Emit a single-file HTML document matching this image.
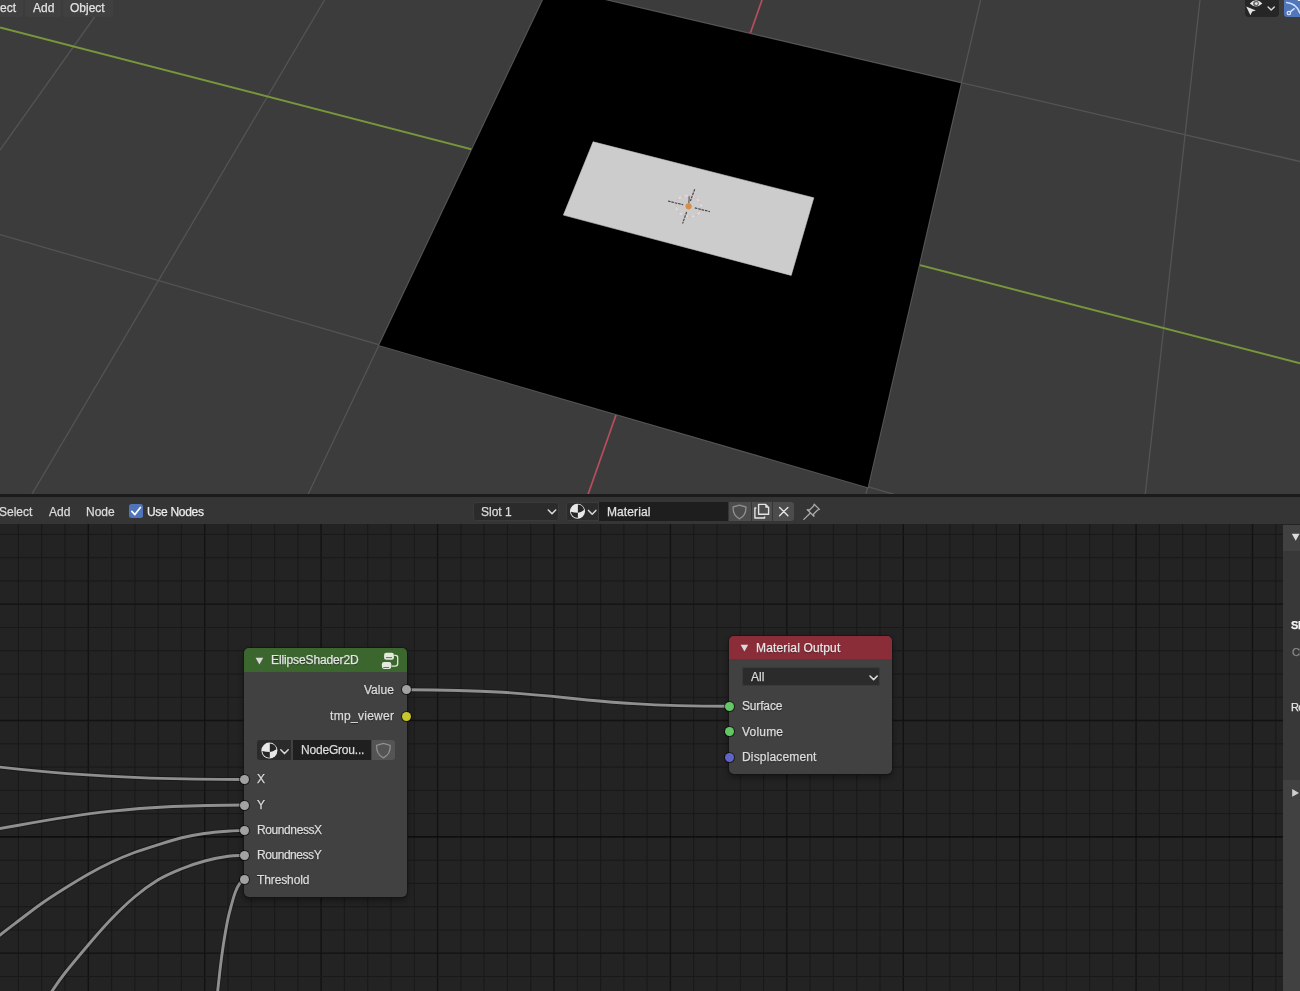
<!DOCTYPE html>
<html><head><meta charset="utf-8"><title>Blender</title>
<style>
html,body{margin:0;padding:0;}
body{width:1300px;height:991px;overflow:hidden;position:relative;background:#232323;
 font-family:"Liberation Sans",sans-serif;font-size:12px;color:#dcdcdc;}
.abs{position:absolute;}
.t{position:absolute;white-space:nowrap;line-height:14px;height:14px;will-change:transform;-webkit-text-stroke:0.25px currentColor;}
.sh{text-shadow:0 1px 1px rgba(0,0,0,.55);}
.sock{position:absolute;width:9px;height:9px;border-radius:50%;box-shadow:0 0 0 1px rgba(0,0,0,.55);}
</style></head><body>

<svg class="abs" style="left:0;top:0" width="1300" height="494" viewBox="0 0 1300 494">
<rect width="1300" height="494" fill="#3c3c3c"/>
<line x1="106.6" y1="0.0" x2="0.0" y2="150.0" stroke="#545454" stroke-width="1.30" />
<line x1="324.6" y1="0.0" x2="32.0" y2="494.0" stroke="#545454" stroke-width="1.30" />
<line x1="549.2" y1="-13.1" x2="308.2" y2="494.0" stroke="#545454" stroke-width="1.30" />
<line x1="980.6" y1="0.0" x2="866.0" y2="494.0" stroke="#545454" stroke-width="1.30" />
<line x1="1200.0" y1="0.0" x2="1145.3" y2="494.0" stroke="#545454" stroke-width="1.30" />
<line x1="0.0" y1="234.5" x2="895.0" y2="494.6" stroke="#545454" stroke-width="1.30" />
<line x1="476.7" y1="-30.0" x2="1300.0" y2="161.5" stroke="#545454" stroke-width="1.30" />
<line x1="0.0" y1="27.4" x2="1300.0" y2="363.3" stroke="#78963a" stroke-width="1.90" />
<line x1="762.0" y1="0.0" x2="588.0" y2="494.5" stroke="#b64d60" stroke-width="1.70" />
<polygon points="549.2,-13.05 960.9,83.2 867.7,487.2 379.2,345.2" fill="none" stroke="#555555" stroke-width="2.1"/>
<polygon points="549.2,-13.05 960.9,83.2 867.7,487.2 379.2,345.2" fill="#000"/>
<polygon points="593.1,141.8 813.8,197.8 791.2,275.4 563.4,215.1" fill="#cccccc" stroke="#cccccc" stroke-width="0.6" stroke-linejoin="round"/>
<g>
<ellipse cx="688.6" cy="206.2" rx="13" ry="10.2" fill="none" stroke="#e9a9a9" stroke-width="1.5" stroke-dasharray="3 3.4" opacity=".42" transform="rotate(14 688.6 206.2)"/>
<ellipse cx="688.6" cy="206.2" rx="13" ry="10.2" fill="none" stroke="#f8f8f8" stroke-width="1.5" stroke-dasharray="3 3.4" stroke-dashoffset="3.2" opacity=".42" transform="rotate(14 688.6 206.2)"/>
<line x1="668.0" y1="201.0" x2="683.2" y2="204.8" stroke="#303030" stroke-width="1.15" stroke-dasharray="2.6 0.9" opacity=".88"/>
<line x1="694.8" y1="207.9" x2="709.8" y2="211.6" stroke="#303030" stroke-width="1.15" stroke-dasharray="2.6 0.9" opacity=".88"/>
<line x1="694.7" y1="189.2" x2="690.4" y2="201.0" stroke="#303030" stroke-width="1.15" stroke-dasharray="2.6 0.9" opacity=".88"/>
<line x1="686.6" y1="212.0" x2="682.6" y2="223.5" stroke="#303030" stroke-width="1.15" stroke-dasharray="2.6 0.9" opacity=".88"/>
<line x1="689.2" y1="196.2" x2="688.8" y2="203.5" stroke="#3a3a3a" stroke-width="1.15" opacity=".8"/>
<circle cx="688.6" cy="206.3" r="3.1" fill="#d78f47"/>
</g>
</svg>
<div class="abs" style="left:-10px;top:-2px;width:33px;height:18.5px;background:#404040;border-radius:0 0 3px 3px;"></div>
<div class="t" style="left:-0.4px;top:0.5px;color:#e2e2e2">ect</div>
<div class="abs" style="left:25px;top:-2px;width:35.5px;height:18.5px;background:#404040;border-radius:0 0 3px 3px;"></div>
<div class="t" style="left:33px;top:0.5px;color:#e2e2e2">Add</div>
<div class="abs" style="left:62.5px;top:-2px;width:50.5px;height:18.5px;background:#404040;border-radius:0 0 3px 3px;"></div>
<div class="t" style="left:70px;top:0.5px;color:#e2e2e2">Object</div>
<div class="abs" style="left:1244.5px;top:-4px;width:34px;height:20.5px;background:#262626;border-radius:0 0 4px 4px;"></div>
<svg class="abs" style="left:1244px;top:0" width="36" height="18" viewBox="1244 0 36 18">
<path d="M1249.8 3.6 Q1256 -3.2 1262.3 3.6 Q1256 9.6 1249.8 3.6 Z" fill="#e4e4e4"/>
<circle cx="1256" cy="3.6" r="2.9" fill="#6a6a6a"/>
<circle cx="1256.3" cy="3.6" r="1.4" fill="#e4e4e4"/>
<polygon points="1246.2,6.4 1255.9,10.5 1252.2,11.6 1250.4,15.2" fill="#e4e4e4"/>
<polyline points="1268.1,7.0 1271.2,10.1 1274.3,7.0" fill="none" stroke="#d8d8d8" stroke-width="1.4" stroke-linecap="round" stroke-linejoin="round"/>
</svg>
<div class="abs" style="left:1284px;top:-4px;width:20px;height:21px;background:#5176ba;border-radius:0 0 0 3px;"></div>
<svg class="abs" style="left:1284px;top:0" width="16" height="18" viewBox="1284 0 16 18">
<path d="M1286.6 2.4 Q1296.5 3.2 1299.8 13" fill="none" stroke="#cfe0ff" stroke-width="1.5" stroke-linecap="round"/>
<rect x="1297.8" y="-1" width="3" height="1.9" fill="#fff"/>
<line x1="1290.2" y1="11.9" x2="1294.6" y2="8.4" stroke="#cfe0ff" stroke-width="1.4"/>
<circle cx="1288.9" cy="13" r="1.7" fill="none" stroke="#dbe7ff" stroke-width="1.3"/>
</svg>
<div class="abs" style="left:0;top:494px;width:1300px;height:3px;background:#1b1b1b"></div>
<div class="abs" style="left:0;top:497px;width:1300px;height:27px;background:#353535"></div>
<div class="t" style="left:-1.5px;top:504.5px;color:#dcdcdc;">Select</div>
<div class="t" style="left:49px;top:504.5px;color:#dcdcdc;">Add</div>
<div class="t" style="left:86.3px;top:504.5px;color:#dcdcdc;">Node</div>
<div class="abs" style="left:128.8px;top:504.3px;width:14.4px;height:14px;background:#4f74b9;border-radius:2.5px;"></div>
<svg class="abs" style="left:128px;top:503px" width="17" height="17" viewBox="128 503 17 17">
<polyline points="131.8,511.3 134.9,514.6 140.4,507.4" fill="none" stroke="#ffffff" stroke-width="1.7" stroke-linecap="round" stroke-linejoin="round"/></svg>
<div class="t" style="left:147.3px;top:504.5px;color:#ececec;letter-spacing:-0.3px">Use Nodes</div>
<div class="abs" style="left:473px;top:502px;width:85.5px;height:18.5px;background:#2b2b2b;border-radius:3px;box-shadow:0 0 0 1px #3b3b3b inset;"></div>
<div class="t" style="left:480.6px;top:504.5px;color:#dcdcdc;">Slot 1</div>
<svg class="abs" style="left:545px;top:505px" width="14" height="14" viewBox="545 505 14 14">
<polyline points="548.3,510 552,513.7 555.7,510" fill="none" stroke="#d8d8d8" stroke-width="1.6" stroke-linecap="round" stroke-linejoin="round"/></svg>
<div class="abs" style="left:566px;top:502px;width:32.5px;height:18.5px;background:#2b2b2b;border-radius:3px 0 0 3px;box-shadow:0 0 0 1px #3b3b3b inset;"></div>
<svg class="abs" style="left:566px;top:501px" width="36" height="22" viewBox="566 501 36 22"><circle cx="577.5" cy="511.2" r="7.5" fill="#e8e8e8"/><path d="M577.90 512.70 L577.90 504.55 A6.65 6.65 0 0 1 584.03 509.93 Q580.90 512.30 577.90 512.70 Z" fill="#262626"/><path d="M577.90 512.70 L577.90 517.85 A6.65 6.65 0 0 1 570.87 511.66 Q574.10 512.70 577.90 512.70 Z" fill="#262626"/><polyline points="588.5,510.4 592.2,514.2 595.9,510.4" fill="none" stroke="#d8d8d8" stroke-width="1.5" stroke-linecap="round" stroke-linejoin="round"/></svg>
<div class="abs" style="left:599.3px;top:502px;width:129.2px;height:18.5px;background:#1e1e1e;"></div>
<div class="t" style="left:607.2px;top:504.5px;color:#e2e2e2;letter-spacing:0.1px">Material</div>
<div class="abs" style="left:729.3px;top:502px;width:21.5px;height:18.5px;background:#4c4c4c;"></div>
<div class="abs" style="left:751.8px;top:502px;width:20.6px;height:18.5px;background:#4c4c4c;"></div>
<div class="abs" style="left:773.4px;top:502px;width:20.6px;height:18.5px;background:#4c4c4c;border-radius:0 3px 3px 0;"></div>
<svg class="abs" style="left:729px;top:501px" width="95" height="21" viewBox="729 501 95 21">
<path d="M739.5 505.2 L745.9 507 Q746.3 515.5 739.5 518.8 Q732.7 515.5 733.1 507 Z" fill="none" stroke="#8e8e8e" stroke-width="1.3" stroke-linejoin="round"/>
<path d="M758.6 504.4 H765.6 L768.6 507.4 V514.2 H758.6 Z" fill="#4c4c4c" stroke="#e4e4e4" stroke-width="1.4" stroke-linejoin="round"/>
<path d="M765.3 504.4 V507.7 H768.6 Z" fill="#e4e4e4"/>
<path d="M756.3 508 H754.9 V518 H764.6 V516.4" fill="none" stroke="#e4e4e4" stroke-width="1.4" stroke-linejoin="round"/>
<path d="M779.6 507.4 L787.9 515.7 M787.9 507.4 L779.6 515.7" stroke="#e6e6e6" stroke-width="1.35" stroke-linecap="round"/>
<g fill="none" stroke="#a9a9a9" stroke-width="1.3" stroke-linejoin="round" stroke-linecap="round">
<path d="M814.2 504.2 L819.4 509.4 L817.6 510 L813.6 514 L813.9 516.3 L807.3 509.7 L809.6 510 L813.6 506 Z"/>
<path d="M810.4 513 L803.8 519.4"/>
</g>
</svg>
<svg class="abs" style="left:0;top:524px" width="1283" height="467" viewBox="0 524 1283 467">
<rect x="0" y="524" width="1283" height="467" fill="#232323"/>
<line x1="18.4" y1="524.0" x2="18.4" y2="991.0" stroke="#191919" stroke-width="1.00" />
<line x1="41.7" y1="524.0" x2="41.7" y2="991.0" stroke="#191919" stroke-width="1.00" />
<line x1="65.0" y1="524.0" x2="65.0" y2="991.0" stroke="#191919" stroke-width="1.00" />
<line x1="88.3" y1="524.0" x2="88.3" y2="991.0" stroke="#121212" stroke-width="1.30" />
<line x1="111.6" y1="524.0" x2="111.6" y2="991.0" stroke="#191919" stroke-width="1.00" />
<line x1="134.9" y1="524.0" x2="134.9" y2="991.0" stroke="#191919" stroke-width="1.00" />
<line x1="158.2" y1="524.0" x2="158.2" y2="991.0" stroke="#191919" stroke-width="1.00" />
<line x1="181.4" y1="524.0" x2="181.4" y2="991.0" stroke="#191919" stroke-width="1.00" />
<line x1="204.7" y1="524.0" x2="204.7" y2="991.0" stroke="#121212" stroke-width="1.30" />
<line x1="228.0" y1="524.0" x2="228.0" y2="991.0" stroke="#191919" stroke-width="1.00" />
<line x1="251.3" y1="524.0" x2="251.3" y2="991.0" stroke="#191919" stroke-width="1.00" />
<line x1="274.6" y1="524.0" x2="274.6" y2="991.0" stroke="#191919" stroke-width="1.00" />
<line x1="297.9" y1="524.0" x2="297.9" y2="991.0" stroke="#191919" stroke-width="1.00" />
<line x1="321.1" y1="524.0" x2="321.1" y2="991.0" stroke="#121212" stroke-width="1.30" />
<line x1="344.4" y1="524.0" x2="344.4" y2="991.0" stroke="#191919" stroke-width="1.00" />
<line x1="367.7" y1="524.0" x2="367.7" y2="991.0" stroke="#191919" stroke-width="1.00" />
<line x1="391.0" y1="524.0" x2="391.0" y2="991.0" stroke="#191919" stroke-width="1.00" />
<line x1="414.3" y1="524.0" x2="414.3" y2="991.0" stroke="#191919" stroke-width="1.00" />
<line x1="437.6" y1="524.0" x2="437.6" y2="991.0" stroke="#121212" stroke-width="1.30" />
<line x1="460.9" y1="524.0" x2="460.9" y2="991.0" stroke="#191919" stroke-width="1.00" />
<line x1="484.1" y1="524.0" x2="484.1" y2="991.0" stroke="#191919" stroke-width="1.00" />
<line x1="507.4" y1="524.0" x2="507.4" y2="991.0" stroke="#191919" stroke-width="1.00" />
<line x1="530.7" y1="524.0" x2="530.7" y2="991.0" stroke="#191919" stroke-width="1.00" />
<line x1="554.0" y1="524.0" x2="554.0" y2="991.0" stroke="#121212" stroke-width="1.30" />
<line x1="577.3" y1="524.0" x2="577.3" y2="991.0" stroke="#191919" stroke-width="1.00" />
<line x1="600.6" y1="524.0" x2="600.6" y2="991.0" stroke="#191919" stroke-width="1.00" />
<line x1="623.9" y1="524.0" x2="623.9" y2="991.0" stroke="#191919" stroke-width="1.00" />
<line x1="647.1" y1="524.0" x2="647.1" y2="991.0" stroke="#191919" stroke-width="1.00" />
<line x1="670.4" y1="524.0" x2="670.4" y2="991.0" stroke="#121212" stroke-width="1.30" />
<line x1="693.7" y1="524.0" x2="693.7" y2="991.0" stroke="#191919" stroke-width="1.00" />
<line x1="717.0" y1="524.0" x2="717.0" y2="991.0" stroke="#191919" stroke-width="1.00" />
<line x1="740.3" y1="524.0" x2="740.3" y2="991.0" stroke="#191919" stroke-width="1.00" />
<line x1="763.6" y1="524.0" x2="763.6" y2="991.0" stroke="#191919" stroke-width="1.00" />
<line x1="786.8" y1="524.0" x2="786.8" y2="991.0" stroke="#121212" stroke-width="1.30" />
<line x1="810.1" y1="524.0" x2="810.1" y2="991.0" stroke="#191919" stroke-width="1.00" />
<line x1="833.4" y1="524.0" x2="833.4" y2="991.0" stroke="#191919" stroke-width="1.00" />
<line x1="856.7" y1="524.0" x2="856.7" y2="991.0" stroke="#191919" stroke-width="1.00" />
<line x1="880.0" y1="524.0" x2="880.0" y2="991.0" stroke="#191919" stroke-width="1.00" />
<line x1="903.3" y1="524.0" x2="903.3" y2="991.0" stroke="#121212" stroke-width="1.30" />
<line x1="926.6" y1="524.0" x2="926.6" y2="991.0" stroke="#191919" stroke-width="1.00" />
<line x1="949.8" y1="524.0" x2="949.8" y2="991.0" stroke="#191919" stroke-width="1.00" />
<line x1="973.1" y1="524.0" x2="973.1" y2="991.0" stroke="#191919" stroke-width="1.00" />
<line x1="996.4" y1="524.0" x2="996.4" y2="991.0" stroke="#191919" stroke-width="1.00" />
<line x1="1019.7" y1="524.0" x2="1019.7" y2="991.0" stroke="#121212" stroke-width="1.30" />
<line x1="1043.0" y1="524.0" x2="1043.0" y2="991.0" stroke="#191919" stroke-width="1.00" />
<line x1="1066.3" y1="524.0" x2="1066.3" y2="991.0" stroke="#191919" stroke-width="1.00" />
<line x1="1089.6" y1="524.0" x2="1089.6" y2="991.0" stroke="#191919" stroke-width="1.00" />
<line x1="1112.8" y1="524.0" x2="1112.8" y2="991.0" stroke="#191919" stroke-width="1.00" />
<line x1="1136.1" y1="524.0" x2="1136.1" y2="991.0" stroke="#121212" stroke-width="1.30" />
<line x1="1159.4" y1="524.0" x2="1159.4" y2="991.0" stroke="#191919" stroke-width="1.00" />
<line x1="1182.7" y1="524.0" x2="1182.7" y2="991.0" stroke="#191919" stroke-width="1.00" />
<line x1="1206.0" y1="524.0" x2="1206.0" y2="991.0" stroke="#191919" stroke-width="1.00" />
<line x1="1229.3" y1="524.0" x2="1229.3" y2="991.0" stroke="#191919" stroke-width="1.00" />
<line x1="1252.5" y1="524.0" x2="1252.5" y2="991.0" stroke="#121212" stroke-width="1.30" />
<line x1="1275.8" y1="524.0" x2="1275.8" y2="991.0" stroke="#191919" stroke-width="1.00" />
<line x1="0.0" y1="976.5" x2="1283.0" y2="976.5" stroke="#191919" stroke-width="1.00" />
<line x1="0.0" y1="953.2" x2="1283.0" y2="953.2" stroke="#121212" stroke-width="1.30" />
<line x1="0.0" y1="930.0" x2="1283.0" y2="930.0" stroke="#191919" stroke-width="1.00" />
<line x1="0.0" y1="906.7" x2="1283.0" y2="906.7" stroke="#191919" stroke-width="1.00" />
<line x1="0.0" y1="883.4" x2="1283.0" y2="883.4" stroke="#191919" stroke-width="1.00" />
<line x1="0.0" y1="860.2" x2="1283.0" y2="860.2" stroke="#191919" stroke-width="1.00" />
<line x1="0.0" y1="836.9" x2="1283.0" y2="836.9" stroke="#090909" stroke-width="1.40" />
<line x1="0.0" y1="813.6" x2="1283.0" y2="813.6" stroke="#191919" stroke-width="1.00" />
<line x1="0.0" y1="790.4" x2="1283.0" y2="790.4" stroke="#191919" stroke-width="1.00" />
<line x1="0.0" y1="767.1" x2="1283.0" y2="767.1" stroke="#191919" stroke-width="1.00" />
<line x1="0.0" y1="743.8" x2="1283.0" y2="743.8" stroke="#191919" stroke-width="1.00" />
<line x1="0.0" y1="720.5" x2="1283.0" y2="720.5" stroke="#121212" stroke-width="1.30" />
<line x1="0.0" y1="697.3" x2="1283.0" y2="697.3" stroke="#191919" stroke-width="1.00" />
<line x1="0.0" y1="674.0" x2="1283.0" y2="674.0" stroke="#191919" stroke-width="1.00" />
<line x1="0.0" y1="650.7" x2="1283.0" y2="650.7" stroke="#191919" stroke-width="1.00" />
<line x1="0.0" y1="627.5" x2="1283.0" y2="627.5" stroke="#191919" stroke-width="1.00" />
<line x1="0.0" y1="604.2" x2="1283.0" y2="604.2" stroke="#121212" stroke-width="1.30" />
<line x1="0.0" y1="580.9" x2="1283.0" y2="580.9" stroke="#191919" stroke-width="1.00" />
<line x1="0.0" y1="557.7" x2="1283.0" y2="557.7" stroke="#191919" stroke-width="1.00" />
<line x1="0.0" y1="534.4" x2="1283.0" y2="534.4" stroke="#191919" stroke-width="1.00" />
<path d="M407 689.7 C568 689.7 568 706.2 729.5 706.2" fill="none" stroke="#171717" stroke-width="4.6" stroke-linecap="round" opacity=".75"/>
<path d="M407 689.7 C568 689.7 568 706.2 729.5 706.2" fill="none" stroke="#8f8f8f" stroke-width="2.9" stroke-linecap="round"/>
<path d="M-349.4 742.1 C-52.8 742.1 -52.8 779.5 243.8 779.5" fill="none" stroke="#171717" stroke-width="4.6" stroke-linecap="round" opacity=".75"/>
<path d="M-349.4 742.1 C-52.8 742.1 -52.8 779.5 243.8 779.5" fill="none" stroke="#8f8f8f" stroke-width="2.9" stroke-linecap="round"/>
<path d="M-209.4 846.0 C17.2 846.0 17.2 805.0 243.8 805.0" fill="none" stroke="#171717" stroke-width="4.6" stroke-linecap="round" opacity=".75"/>
<path d="M-209.4 846.0 C17.2 846.0 17.2 805.0 243.8 805.0" fill="none" stroke="#8f8f8f" stroke-width="2.9" stroke-linecap="round"/>
<path d="M-18.0 950.0 C-12.0 945.0 -6.0 939.8 0.0 935.0 C6.0 930.2 11.4 926.2 18.3 921.0 C25.2 915.8 33.6 909.1 41.3 903.7 C49.0 898.3 56.7 893.4 64.5 888.5 C72.3 883.6 80.4 878.6 88.2 874.2 C96.0 869.8 103.6 865.8 111.3 862.2 C119.0 858.6 126.8 855.4 134.5 852.5 C142.2 849.6 150.1 847.2 157.8 844.8 C165.5 842.4 173.1 839.9 180.8 838.0 C188.5 836.1 196.5 834.6 204.2 833.5 C211.9 832.4 220.3 831.7 226.9 831.2 C233.5 830.7 238.2 830.7 243.8 830.5" fill="none" stroke="#171717" stroke-width="4.6" stroke-linecap="round" opacity=".75"/>
<path d="M-18.0 950.0 C-12.0 945.0 -6.0 939.8 0.0 935.0 C6.0 930.2 11.4 926.2 18.3 921.0 C25.2 915.8 33.6 909.1 41.3 903.7 C49.0 898.3 56.7 893.4 64.5 888.5 C72.3 883.6 80.4 878.6 88.2 874.2 C96.0 869.8 103.6 865.8 111.3 862.2 C119.0 858.6 126.8 855.4 134.5 852.5 C142.2 849.6 150.1 847.2 157.8 844.8 C165.5 842.4 173.1 839.9 180.8 838.0 C188.5 836.1 196.5 834.6 204.2 833.5 C211.9 832.4 220.3 831.7 226.9 831.2 C233.5 830.7 238.2 830.7 243.8 830.5" fill="none" stroke="#8f8f8f" stroke-width="2.9" stroke-linecap="round"/>
<path d="M42.0 1005.0 C45.4 1000.3 48.4 996.2 52.1 991.0 C55.8 985.8 58.2 981.7 64.2 974.0 C70.2 966.3 80.4 954.2 88.2 945.0 C96.0 935.8 103.6 927.0 111.3 919.0 C119.0 911.0 126.8 903.5 134.5 897.0 C142.2 890.5 150.1 884.7 157.8 880.0 C165.6 875.3 173.2 872.2 181.0 869.0 C188.8 865.8 197.0 863.1 204.8 861.0 C212.6 858.9 221.5 857.2 228.0 856.3 C234.5 855.3 238.5 855.6 243.8 855.3" fill="none" stroke="#171717" stroke-width="4.6" stroke-linecap="round" opacity=".75"/>
<path d="M42.0 1005.0 C45.4 1000.3 48.4 996.2 52.1 991.0 C55.8 985.8 58.2 981.7 64.2 974.0 C70.2 966.3 80.4 954.2 88.2 945.0 C96.0 935.8 103.6 927.0 111.3 919.0 C119.0 911.0 126.8 903.5 134.5 897.0 C142.2 890.5 150.1 884.7 157.8 880.0 C165.6 875.3 173.2 872.2 181.0 869.0 C188.8 865.8 197.0 863.1 204.8 861.0 C212.6 858.9 221.5 857.2 228.0 856.3 C234.5 855.3 238.5 855.6 243.8 855.3" fill="none" stroke="#8f8f8f" stroke-width="2.9" stroke-linecap="round"/>
<path d="M216.6 1005.0 C217.0 1000.3 217.1 997.0 217.7 991.0 C218.3 985.0 219.2 976.9 220.1 969.2 C221.0 961.5 222.1 953.1 223.3 945.0 C224.6 936.9 226.2 927.3 227.6 920.4 C229.0 913.5 230.5 908.4 231.8 903.6 C233.1 898.8 234.2 894.9 235.5 891.7 C236.8 888.5 237.9 886.2 239.3 884.2 C240.7 882.2 242.3 881.2 243.8 879.7" fill="none" stroke="#171717" stroke-width="4.6" stroke-linecap="round" opacity=".75"/>
<path d="M216.6 1005.0 C217.0 1000.3 217.1 997.0 217.7 991.0 C218.3 985.0 219.2 976.9 220.1 969.2 C221.0 961.5 222.1 953.1 223.3 945.0 C224.6 936.9 226.2 927.3 227.6 920.4 C229.0 913.5 230.5 908.4 231.8 903.6 C233.1 898.8 234.2 894.9 235.5 891.7 C236.8 888.5 237.9 886.2 239.3 884.2 C240.7 882.2 242.3 881.2 243.8 879.7" fill="none" stroke="#8f8f8f" stroke-width="2.9" stroke-linecap="round"/>
</svg>
<div class="abs" style="left:244px;top:648.3px;width:162.6px;height:248.7px;background:#414141;border-radius:5px;box-shadow:0 0 0 1px rgba(20,20,20,.75),0 3px 6px rgba(0,0,0,.45);overflow:hidden;"><div style="height:23.3px;background:#3b662e;"></div></div>
<svg class="abs" style="left:255.3px;top:656.55px" width="10" height="9" viewBox="0 0 10 9"><polygon points="0.6,0.8 8.2,0.8 4.4,7.6" fill="#d9d9d9"/></svg>
<div class="t sh" style="left:271.2px;top:653.35px;color:#e6e6e6;letter-spacing:-0.12px">EllipseShader2D</div>
<svg class="abs" style="left:380px;top:651px" width="20" height="20" viewBox="380 651 20 20">
<rect x="384.1" y="652.8" width="9.8" height="7" rx="2.1" fill="#e4e9df"/>
<rect x="381.9" y="662.1" width="9.4" height="6.8" rx="2.1" fill="#e4e9df"/>
<rect x="386" y="657.2" width="6" height="0.9" fill="#55624e"/>
<rect x="383.3" y="667" width="5.8" height="0.9" fill="#55624e"/>
<path d="M394.2 655.3 H395.6 Q397.7 655.3 397.7 657.5 V663.6 Q397.7 666.2 395.1 666.2 H391.6" fill="none" stroke="#dfe8d6" stroke-width="1.3"/>
</svg>
<div class="t sh" style="right:906px;top:682.7px;">Value</div>
<div class="t sh" style="right:905.8px;top:708.9px;letter-spacing:0.3px">tmp_viewer</div>
<div class="sock" style="left:402.4px;top:685.2px;background:#a2a2a2"></div>
<div class="sock" style="left:402.4px;top:711.5px;background:#c8c82a"></div>
<div class="abs" style="left:257px;top:740.3px;width:33.7px;height:20.2px;background:#2b2b2b;border-radius:3px 0 0 3px;"></div>
<div class="abs" style="left:293px;top:740.3px;width:78px;height:20.2px;background:#1f1f1f;"></div>
<div class="abs" style="left:371.6px;top:740.3px;width:23.6px;height:20.2px;background:#545454;border-radius:0 3px 3px 0;"></div>
<svg class="abs" style="left:257px;top:739px" width="36" height="22" viewBox="257 739 36 22"><circle cx="269.4" cy="750.6" r="8" fill="#e8e8e8"/><path d="M269.80 752.10 L269.80 743.45 A7.15 7.15 0 0 1 276.42 749.24 Q272.80 751.70 269.80 752.10 Z" fill="#262626"/><path d="M269.80 752.10 L269.80 757.75 A7.15 7.15 0 0 1 262.27 751.10 Q266.00 752.10 269.80 752.10 Z" fill="#262626"/><polyline points="280.8,749.8 284.5,753.6 288.2,749.8" fill="none" stroke="#d8d8d8" stroke-width="1.5" stroke-linecap="round" stroke-linejoin="round"/></svg>
<div class="t sh" style="left:301.3px;top:743.4px;letter-spacing:-0.2px">NodeGrou...</div>
<svg class="abs" style="left:372px;top:741px" width="23" height="19" viewBox="372 741 23 19">
<path d="M383.4 743.4 L390.2 745.4 Q390.6 754.4 383.4 757.9 Q376.2 754.4 376.6 745.4 Z" fill="none" stroke="#8f8f8f" stroke-width="1.3" stroke-linejoin="round"/></svg>
<div class="sock" style="left:239.6px;top:774.9px;background:#a2a2a2"></div>
<div class="t sh" style="left:257.2px;top:772.2px;letter-spacing:0px">X</div>
<div class="sock" style="left:239.6px;top:800.5px;background:#a2a2a2"></div>
<div class="t sh" style="left:257.2px;top:797.8px;letter-spacing:0px">Y</div>
<div class="sock" style="left:239.6px;top:825.9px;background:#a2a2a2"></div>
<div class="t sh" style="left:257.2px;top:823.2px;letter-spacing:-0.4px">RoundnessX</div>
<div class="sock" style="left:239.6px;top:850.8px;background:#a2a2a2"></div>
<div class="t sh" style="left:257.2px;top:848.1px;letter-spacing:-0.45px">RoundnessY</div>
<div class="sock" style="left:239.6px;top:875.2px;background:#a2a2a2"></div>
<div class="t sh" style="left:257.2px;top:872.5px;letter-spacing:-0.12px">Threshold</div>
<div class="abs" style="left:729.3px;top:635.8px;width:162.8px;height:138.6px;background:#414141;border-radius:5px;box-shadow:0 0 0 1px rgba(20,20,20,.75),0 3px 6px rgba(0,0,0,.45);overflow:hidden;"><div style="height:23.2px;background:#8b2c39;"></div></div>
<svg class="abs" style="left:740.3px;top:644px" width="10" height="9" viewBox="0 0 10 9"><polygon points="0.6,0.8 8.2,0.8 4.4,7.6" fill="#d9d9d9"/></svg>
<div class="t sh" style="left:756.2px;top:640.8px;color:#e6e6e6;letter-spacing:0.16px">Material Output</div>
<div class="abs" style="left:742.4px;top:667.4px;width:137.2px;height:19px;background:#2b2b2b;border-radius:3px;box-shadow:0 0 0 1px #3a3a3a inset;"></div>
<div class="t sh" style="left:750.5px;top:669.8px;">All</div>
<svg class="abs" style="left:866px;top:671px" width="14" height="14" viewBox="866 671 14 14">
<polyline points="870,676 873.6,679.6 877.2,676" fill="none" stroke="#d8d8d8" stroke-width="1.6" stroke-linecap="round" stroke-linejoin="round"/></svg>
<div class="sock" style="left:725px;top:701.7px;background:#63c763"></div>
<div class="t sh" style="left:742.2px;top:699px;letter-spacing:-0.16px">Surface</div>
<div class="sock" style="left:725px;top:727.4px;background:#63c763"></div>
<div class="t sh" style="left:742.2px;top:724.7px;letter-spacing:0.2px">Volume</div>
<div class="sock" style="left:725px;top:752.9px;background:#6363c7"></div>
<div class="t sh" style="left:742.2px;top:750.2px;letter-spacing:0.16px">Displacement</div>
<div class="abs" style="left:1282.7px;top:525px;width:18px;height:467px;background:#414141"></div>
<div class="abs" style="left:1282.7px;top:551px;width:18px;height:228.5px;background:#383838"></div>
<svg class="abs" style="left:1290px;top:532px" width="10" height="10" viewBox="0 0 10 10"><polygon points="1.8,1.8 9.6,1.8 5.7,8.8" fill="#dcdcdc"/></svg>
<svg class="abs" style="left:1290px;top:787px" width="10" height="12" viewBox="0 0 10 12"><polygon points="2.2,2 9,5.9 2.2,9.8" fill="#cfcfcf"/></svg>
<div class="t" style="left:1291.4px;top:617.9px;color:#f4f4f4;font-weight:bold;font-size:11px;letter-spacing:-0.3px">Slot</div>
<div class="t" style="left:1291.6px;top:644.6px;color:#8a8a8a;font-size:11px;letter-spacing:-0.6px">Clamp</div>
<div class="t" style="left:1291.4px;top:699.6px;color:#e6e6e6;font-size:11px;letter-spacing:-0.6px">Roughness</div>
</body></html>
